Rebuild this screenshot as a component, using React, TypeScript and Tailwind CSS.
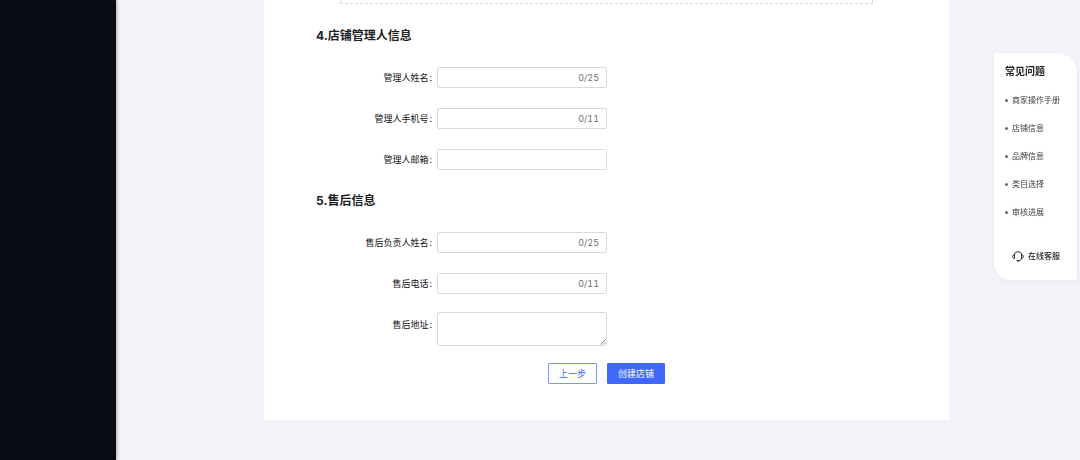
type FieldData = {
  id: string;
  label: string;
  max?: number;
};

const MANAGER_FIELDS: FieldData[] = [
  { id: "manager-name", label: "管理人姓名", max: 25 },
  { id: "manager-phone", label: "管理人手机号", max: 11 },
  { id: "manager-email", label: "管理人邮箱" },
];

const SERVICE_FIELDS: FieldData[] = [
  { id: "service-name", label: "售后负责人姓名", max: 25 },
  { id: "service-phone", label: "售后电话", max: 11 },
];

const FAQ_LINKS = ["商家操作手册", "店铺信息", "品牌信息", "类目选择", "审核进展"];

function FieldLabel({ id, label }: { id: string; label: string }) {
  return (
    <label
      htmlFor={id}
      className="w-[116px] shrink-0 text-right text-[9px] leading-[21px] text-[#111214]"
    >
      {label}
      <span className="ml-px">:</span>
    </label>
  );
}

function Field({ id, label, max }: FieldData) {
  return (
    <div className="flex gap-[5px]">
      <FieldLabel id={id} label={label} />
      <div className="relative w-[170px]">
        <input
          id={id}
          type="text"
          maxLength={max}
          className="block h-[21px] w-full rounded-[2px] border border-[#dadadc] bg-white pr-8 pl-2 text-[9px] outline-none"
        />
        {max && (
          <span className="pointer-events-none absolute inset-y-0 right-2 text-[9px] leading-[21px] text-[#6f7073] tabular-nums">
            0/{max}
          </span>
        )}
      </div>
    </div>
  );
}

function SectionTitle({ children }: { children: string }) {
  return (
    <h2 className="mt-[22px] mb-[23px] text-[12px] leading-[17px] font-bold text-[#1c1d1f]">
      {children}
    </h2>
  );
}

function HeadsetIcon() {
  return (
    <svg
      viewBox="0 0 24 24"
      className="size-3 text-[#333]"
      fill="none"
      stroke="currentColor"
      strokeWidth="2"
      strokeLinecap="round"
      strokeLinejoin="round"
      aria-hidden="true"
    >
      <path d="M4 9.5a8.2 8.2 0 0 1 16 0" />
      <path d="M5 9.500v7.500C2.600 17 1.300 15.300 1.300 13.200S2.600 9.500 5 9.500Z" />
      <path d="M19 9.500V17c2.400 0 3.700-1.700 3.700-3.800S21.400 9.500 19 9.500Z" />
      <path d="M19.500 17c-.8 2.600-2.800 4-6 4.300" />
      <path d="M10.500 21.300h3" strokeWidth="3" />
    </svg>
  );
}

function HelpPanel() {
  return (
    <aside className="fixed top-[53px] right-[3px] w-[83px] rounded-tl-[2px] rounded-tr-[20px] rounded-br-[2px] rounded-bl-[16px] bg-white pt-[10px] pb-[18px] pl-[11px] shadow-[0_1px_5px_rgba(60,60,110,0.06)]">
      <h3 className="text-[10px] leading-4 font-bold text-[#1c1d1f]">常见问题</h3>
      <ul className="mt-[7px]">
        {FAQ_LINKS.map((text) => (
          <li key={text} className="flex h-7 items-center gap-1">
            <span className="size-[3px] rounded-full bg-[#666]" />
            <a href="#" className="text-[8px] leading-3 text-[#3c3d40]">
              {text}
            </a>
          </li>
        ))}
      </ul>
      <button
        type="button"
        className="mt-6 ml-[7px] flex items-center gap-1 text-[8px] leading-3 font-medium text-[#1c1d1f]"
      >
        <HeadsetIcon />
        在线客服
      </button>
    </aside>
  );
}

export default function App() {
  return (
    <div className="flex min-h-screen bg-[#f3f3f9] font-[Inter,'Noto_Sans_CJK_SC',sans-serif]">
      <nav className="w-[116px] shrink-0 bg-[#080d15] shadow-[1px_0_3px_rgba(0,0,0,0.3)]" />

      <main className="flex-1 pr-[131px] pl-[148px]">
        <form className="bg-white pb-9 pl-[52px]">
          {/* bottom edge of the upload area */}
          <div className="mr-[76px] ml-6 h-1 border border-t-0 border-dashed border-[#d9d9dc]" />

          <section className="pt-px">
            <SectionTitle>4.店铺管理人信息</SectionTitle>
            <div className="flex flex-col gap-5">
              {MANAGER_FIELDS.map((field) => (
                <Field key={field.id} {...field} />
              ))}
            </div>
          </section>

          <section>
            <SectionTitle>5.售后信息</SectionTitle>
            <div className="flex flex-col gap-5">
              {SERVICE_FIELDS.map((field) => (
                <Field key={field.id} {...field} />
              ))}
            </div>
            <div className="mt-[18px] flex gap-[5px]">
              <div className="flex pt-[2px]">
                <FieldLabel id="service-address" label="售后地址" />
              </div>
              <div className="relative w-[170px]">
                <textarea
                  id="service-address"
                  className="block h-[34px] w-full resize-none rounded-[2px] border border-[#dadadc] bg-white px-2 py-1 text-[9px] outline-none"
                />
                <svg
                  viewBox="0 0 6 6"
                  className="pointer-events-none absolute right-px bottom-px size-[6px]"
                  stroke="#666"
                  strokeWidth="0.8"
                  aria-hidden="true"
                >
                  <path d="M0.500 5.500 5.500 0.500M3.200 5.500 5.500 3.200" />
                </svg>
              </div>
            </div>
          </section>

          <div className="mt-[17px] ml-[232px] flex gap-[10px] text-[9px] leading-[19px]">
            <button
              type="button"
              className="rounded-[1px] border border-[#7b97fb] bg-white px-[10px] text-[#3f66f8]"
            >
              上一步
            </button>
            <button
              type="submit"
              className="rounded-[1px] border border-[#4069fb] bg-[#4069fb] px-[10px] text-white"
            >
              创建店铺
            </button>
          </div>
        </form>
      </main>

      <HelpPanel />
    </div>
  );
}
